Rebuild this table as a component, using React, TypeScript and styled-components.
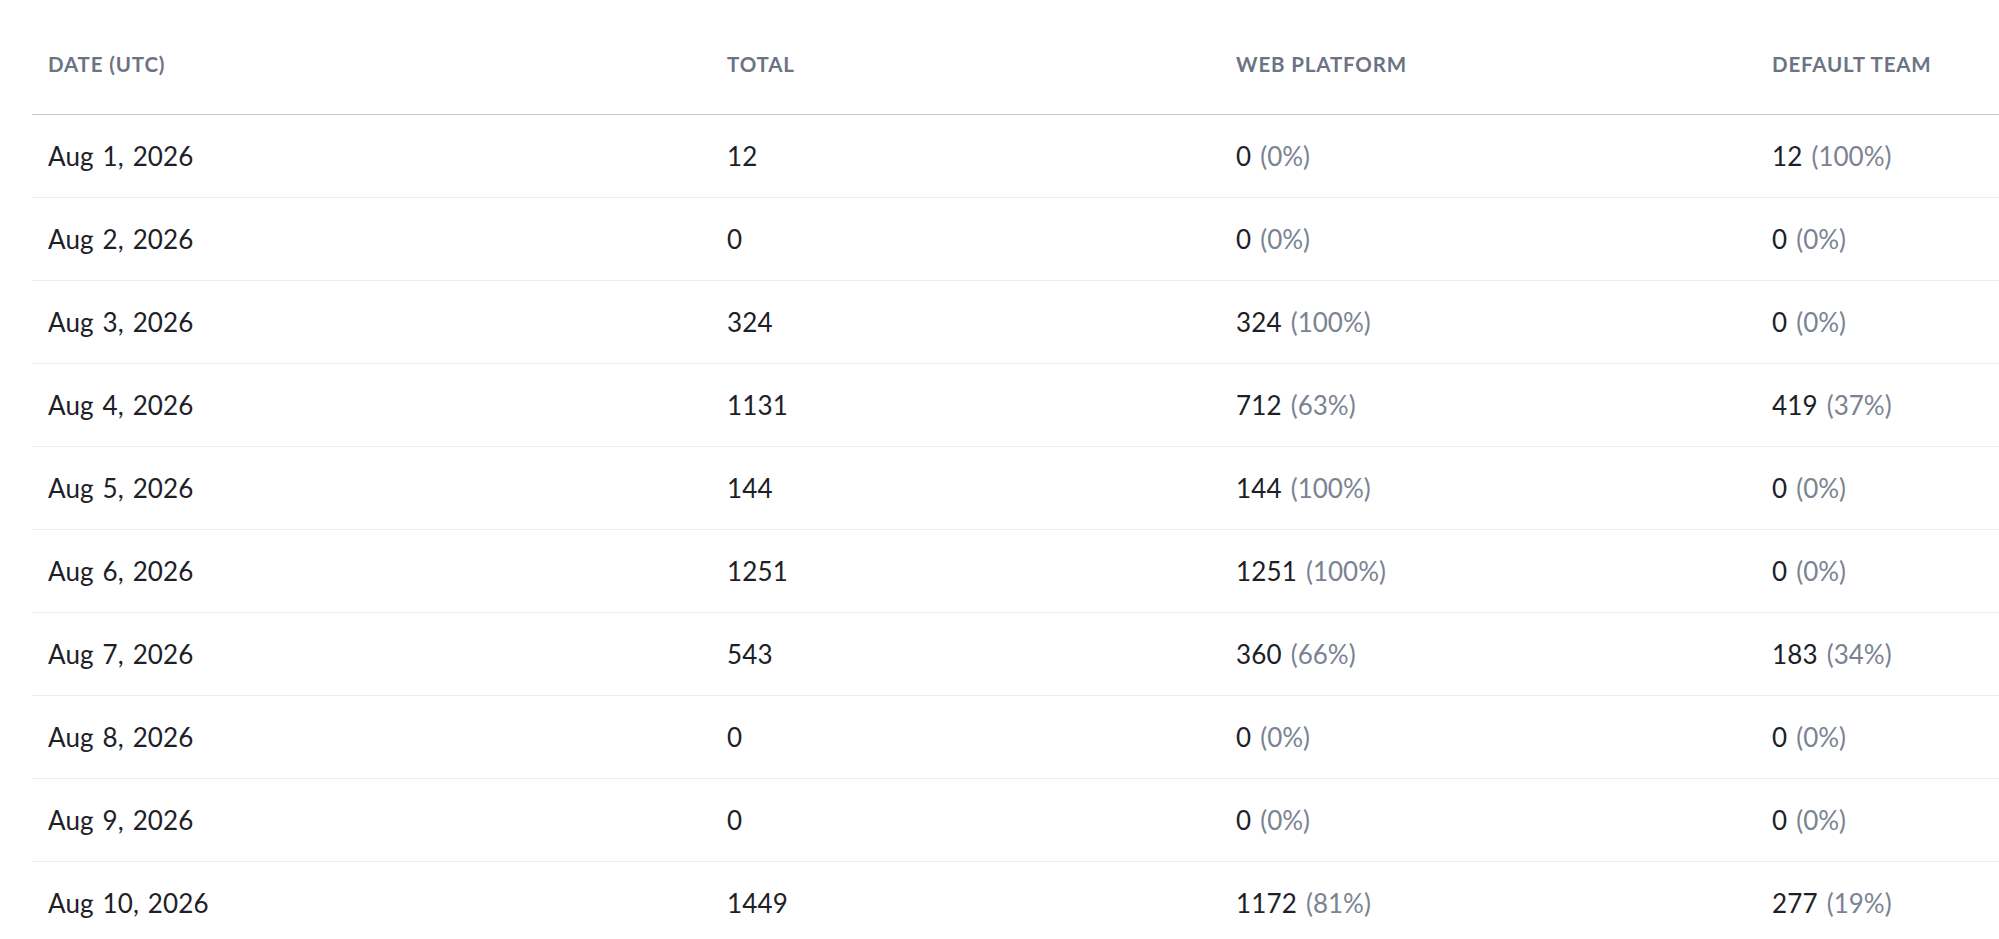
import React from "react";
import styled, { createGlobalStyle } from "styled-components";

const GlobalStyle = createGlobalStyle`
  html, body {
    margin: 0;
    padding: 0;
    background: #ffffff;
    overflow: hidden;
  }
  body {
    font-family: Lato, "Noto Sans", "Liberation Sans", sans-serif;
    -webkit-font-smoothing: antialiased;
  }
`;

const Page = styled.div`
  width: 1999px;
  height: 939px;
  overflow: hidden;
  padding-left: 32px;
  box-sizing: border-box;
  background: #ffffff;
`;

const Table = styled.div`
  display: flex;
  flex-direction: column;
  width: 2400px;
`;

const Row = styled.div<{ $header?: boolean }>`
  display: grid;
  grid-template-columns: 679px 509px 536px 1fr;
  align-items: center;
  box-sizing: border-box;
  height: ${(p) => (p.$header ? "115px" : "83px")};
  padding-top: ${(p) => (p.$header ? "14px" : "0")};
  border-bottom: ${(p) => (p.$header ? "1.5px solid #c6cad6" : "1px solid #ebebf0")};
`;

const HeadCell = styled.div`
  padding-left: 16px;
  font-size: 20.5px;
  font-weight: 700;
  color: #6b7384;
  letter-spacing: 0.85px;
  text-transform: uppercase;
  white-space: nowrap;
`;

const Cell = styled.div`
  padding-left: 16px;
  font-size: 26px;
  font-weight: 400;
  color: #1d2127;
  white-space: nowrap;
  letter-spacing: 0.15px;
  word-spacing: 2px;
`;

const Pct = styled.span`
  color: #7b8393;
  margin-left: 9px;
  letter-spacing: 0;
`;

type Item = { date: string; total: number; web: number; team: number };

const data: Item[] = [
  { date: "Aug 1, 2026", total: 12, web: 0, team: 12 },
  { date: "Aug 2, 2026", total: 0, web: 0, team: 0 },
  { date: "Aug 3, 2026", total: 324, web: 324, team: 0 },
  { date: "Aug 4, 2026", total: 1131, web: 712, team: 419 },
  { date: "Aug 5, 2026", total: 144, web: 144, team: 0 },
  { date: "Aug 6, 2026", total: 1251, web: 1251, team: 0 },
  { date: "Aug 7, 2026", total: 543, web: 360, team: 183 },
  { date: "Aug 8, 2026", total: 0, web: 0, team: 0 },
  { date: "Aug 9, 2026", total: 0, web: 0, team: 0 },
  { date: "Aug 10, 2026", total: 1449, web: 1172, team: 277 },
];

const pct = (v: number, t: number) => (t === 0 ? 0 : Math.round((v / t) * 100));

export default function App() {
  return (
    <>
      <GlobalStyle />
      <Page>
        <Table>
          <Row $header>
            <HeadCell>Date (UTC)</HeadCell>
            <HeadCell>Total</HeadCell>
            <HeadCell>Web Platform</HeadCell>
            <HeadCell>Default Team</HeadCell>
          </Row>
          {data.map((d) => (
            <Row key={d.date}>
              <Cell>{d.date}</Cell>
              <Cell>{d.total}</Cell>
              <Cell>
                {d.web}
                <Pct>({pct(d.web, d.total)}%)</Pct>
              </Cell>
              <Cell>
                {d.team}
                <Pct>({pct(d.team, d.total)}%)</Pct>
              </Cell>
            </Row>
          ))}
        </Table>
      </Page>
    </>
  );
}
